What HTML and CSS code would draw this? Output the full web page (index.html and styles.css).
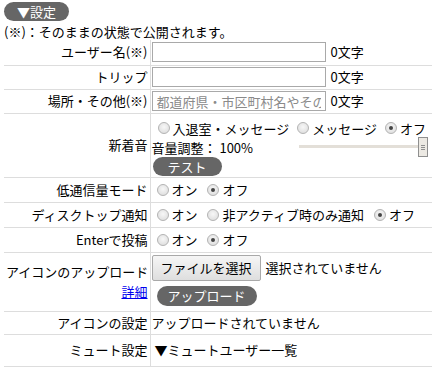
FILE: index.html
```html
<!DOCTYPE html>
<html lang="ja">
<head>
<meta charset="utf-8">
<link rel="stylesheet" href="styles.css">
</head>
<body>
<div class="page">
  <button class="pill pill-settings">▼設定</button>
  <div class="note">(※)：そのままの状態で公開されます。</div>
  <table class="settings">
    <tr class="row-input row-first">
      <th>ユーザー名(※)</th>
      <td><input class="text" type="text"><span class="count">0文字</span></td>
    </tr>
    <tr class="row-input">
      <th>トリップ</th>
      <td><input class="text" type="text"><span class="count">0文字</span></td>
    </tr>
    <tr class="row-input">
      <th>場所・その他(※)</th>
      <td><input class="text" type="text" placeholder="都道府県・市区町村名やその他"><span class="count">0文字</span></td>
    </tr>
    <tr class="row-sound">
      <th>新着音</th>
      <td>
        <div class="line">
          <label class="opt"><input type="radio" name="snd">入退室・メッセージ</label>
          <label class="opt"><input type="radio" name="snd">メッセージ</label>
          <label class="opt"><input type="radio" name="snd" checked>オフ</label>
        </div>
        <div class="line volume">
          <span>音量調整： 100%</span>
          <span class="slider"><span class="track"></span><span class="thumb"></span></span>
        </div>
        <div class="line"><button class="pill pill-test">テスト</button></div>
      </td>
    </tr>
    <tr class="row-radio">
      <th>低通信量モード</th>
      <td>
        <label class="opt"><input type="radio" name="low">オン</label>
        <label class="opt"><input type="radio" name="low" checked>オフ</label>
      </td>
    </tr>
    <tr class="row-radio">
      <th>ディスクトップ通知</th>
      <td>
        <label class="opt"><input type="radio" name="ntf">オン</label>
        <label class="opt"><input type="radio" name="ntf">非アクティブ時のみ通知</label>
        <label class="opt"><input type="radio" name="ntf" checked>オフ</label>
      </td>
    </tr>
    <tr class="row-radio">
      <th>Enterで投稿</th>
      <td>
        <label class="opt"><input type="radio" name="ent">オン</label>
        <label class="opt"><input type="radio" name="ent" checked>オフ</label>
      </td>
    </tr>
    <tr class="row-upload">
      <th>アイコンのアップロード<br><a href="#" class="link">詳細</a></th>
      <td>
        <div class="file-line"><span class="file-btn">ファイルを選択</span><span class="file-name">選択されていません</span></div>
        <div class="upload-line"><button class="pill pill-upload">アップロード</button></div>
      </td>
    </tr>
    <tr class="row-text">
      <th>アイコンの設定</th>
      <td>アップロードされていません</td>
    </tr>
    <tr class="row-mute">
      <th>ミュート設定</th>
      <td><div class="mute">▼ミュートユーザー一覧</div></td>
    </tr>
  </table>
</div>
</body>
</html>
```
FILE: styles.css
```css
* { box-sizing: border-box; }
html, body { margin: 0; padding: 0; background: #fff; }
body {
  font-family: "Noto Sans CJK JP", "Noto Sans", sans-serif;
  font-size: 13px;
  line-height: 20px;
  color: #000;
}
.page { padding: 2px 10px 0 4px; }

.pill {
  display: inline-block;
  height: 19px;
  padding: 0;
  border: none;
  border-radius: 10px;
  background: #666;
  color: #fff;
  font-family: inherit;
  font-size: 13px;
  line-height: 19px;
  text-align: center;
  vertical-align: top;
}
.pill-settings { display: block; width: 65px; }
.pill-test { width: 69px; }
.pill-upload { width: 100px; height: 20px; line-height: 20px; }

.note { height: 19px; line-height: 22px; }

.settings {
  width: 428px;
  table-layout: fixed;
  border-collapse: collapse;
}
.settings th, .settings td {
  border-bottom: 1px solid #ddd;
  padding: 0 2px;
  vertical-align: middle;
  overflow: hidden;
  line-height: 20px;
}
.settings th {
  width: 146px;
  font-weight: normal;
  text-align: right;
  white-space: nowrap;
  border-right: 1px solid #ddd;
}
.settings td { padding-left: 1px; white-space: nowrap; }

.row-first > * { height: 25px; }
.row-input > * { height: 24px; }
.row-first > * { height: 25px; padding-top: 1px; }

.text {
  width: 174px;
  height: 20px;
  margin: 0;
  padding: 1px 4px;
  border: 1px solid #a9a9a9;
  font-family: inherit;
  font-size: 13px;
  line-height: 16px;
  vertical-align: top;
  color: #000;
}
.text::placeholder { color: #8a8a8a; }
.count { margin-left: 5px; }

.opt { display: inline-flex; align-items: center; margin-right: 2px; height: 20px; vertical-align: top; }
.opt input[type=radio] {
  -webkit-appearance: none;
  appearance: none;
  width: 12px;
  height: 12px;
  margin: 0 3px 0 5px;
  border: 1px solid #b4b4b4;
  border-radius: 50%;
  background: radial-gradient(circle at 50% 40%, #f7f7f7 0%, #e2e2e2 70%, #d4d4d4 100%);
  position: relative;
}
.opt input[type=radio]:checked::after {
  content: "";
  position: absolute;
  left: 3px; top: 3px;
  width: 4px; height: 4px;
  border-radius: 50%;
  background: #444;
}

.row-sound > * { height: 64px; }
.row-sound td { vertical-align: top; padding-top: 5px; }
.line { height: 19px; line-height: 19px; display: flex; align-items: center; }
.row-sound .line:first-child .opt input { margin-left: 6px; }
.slider {
  margin-left: auto;
  position: relative;
  width: 129px;
  height: 20px;
  margin-right: 2px;
}
.track {
  position: absolute;
  left: 0; right: 4px; top: 8px;
  height: 3px;
  background: #e3dfd8;
}
.thumb {
  position: absolute;
  right: 0; top: 0;
  width: 10px; height: 20px;
  border: 1px solid #8f8f8f;
  background: #ece9e3;
}
.thumb::before, .thumb::after {
  content: "";
  position: absolute;
  left: 2px; width: 4px; height: 1px;
  background: #8f8f8f;
  box-shadow: 0 2px 0 #8f8f8f;
}
.thumb::before { top: 7px; }
.thumb::after { top: 11px; box-shadow: none; }
.row-sound .pill-test { margin-left: 1px; }

.row-radio > * { height: 25px; }

.row-upload > * { height: 59px; }
.row-upload td { vertical-align: top; padding-top: 2px; }
.file-line { display: flex; align-items: center; height: 26px; }
.file-btn {
  display: inline-block;
  height: 26px;
  padding: 0 8px;
  border: 1px solid #a9a9a9;
  border-radius: 2px;
  background: linear-gradient(#f6f6f6, #dedede);
  line-height: 24px;
  margin-right: 5px;
}
.upload-line { margin-top: 5px; padding-left: 5px; height: 20px; }
.link { color: #00e; text-decoration: underline; }

.row-text > * { height: 23px; }
.row-mute > * { height: 32px; }
.mute { padding-left: 3px; }
```
